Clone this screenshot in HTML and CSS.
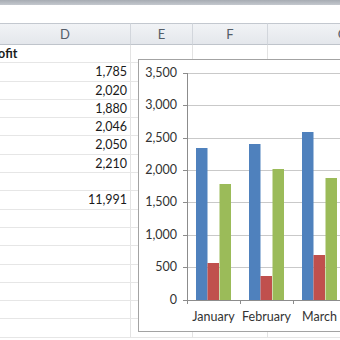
FILE: index.html
```html
<!DOCTYPE html>
<html>
<head>
<meta charset="utf-8">
<link rel="stylesheet" href="styles.css">
</head>
<body>
<div class="app">
  <div class="topbar"></div>
  <div class="strip"></div>
  <div class="sheet">
    <div class="hdr">D</div><div class="hdr">E</div><div class="hdr">F</div><div class="hdr">G</div>

    <div class="cell title"><span class="clip">Profit</span></div><div class="cell"></div><div class="cell"></div><div class="cell"></div>
    <div class="cell num">1,785</div><div class="cell"></div><div class="cell"></div><div class="cell"></div>
    <div class="cell num">2,020</div><div class="cell"></div><div class="cell"></div><div class="cell"></div>
    <div class="cell num">1,880</div><div class="cell"></div><div class="cell"></div><div class="cell"></div>
    <div class="cell num">2,046</div><div class="cell"></div><div class="cell"></div><div class="cell"></div>
    <div class="cell num">2,050</div><div class="cell"></div><div class="cell"></div><div class="cell"></div>
    <div class="cell num">2,210</div><div class="cell"></div><div class="cell"></div><div class="cell"></div>
    <div class="cell num"></div><div class="cell"></div><div class="cell"></div><div class="cell"></div>
    <div class="cell num">11,991</div><div class="cell"></div><div class="cell"></div><div class="cell"></div>
    <div class="cell"></div><div class="cell"></div><div class="cell"></div><div class="cell"></div>
    <div class="cell"></div><div class="cell"></div><div class="cell"></div><div class="cell"></div>
    <div class="cell"></div><div class="cell"></div><div class="cell"></div><div class="cell"></div>
    <div class="cell"></div><div class="cell"></div><div class="cell"></div><div class="cell"></div>
    <div class="cell"></div><div class="cell"></div><div class="cell"></div><div class="cell"></div>
    <div class="cell"></div><div class="cell"></div><div class="cell"></div><div class="cell"></div>
    <div class="cell"></div><div class="cell"></div><div class="cell"></div><div class="cell"></div>
  </div>

  <div class="chart">
    <svg class="plot" width="219" height="271" viewBox="139 60 219 271" xmlns="http://www.w3.org/2000/svg">
      <g class="grid" stroke="#c9c9c9" stroke-width="1">
        <line x1="187" y1="73.5" x2="360" y2="73.5"/>
        <line x1="187" y1="105.5" x2="360" y2="105.5"/>
        <line x1="187" y1="138.5" x2="360" y2="138.5"/>
        <line x1="187" y1="170.5" x2="360" y2="170.5"/>
        <line x1="187" y1="202.5" x2="360" y2="202.5"/>
        <line x1="187" y1="235.5" x2="360" y2="235.5"/>
        <line x1="187" y1="267.5" x2="360" y2="267.5"/>
      </g>
      <g fill="#4f81bd">
        <rect x="196" y="148" width="11.5" height="152"/>
        <rect x="249" y="144" width="11.5" height="156"/>
        <rect x="302" y="132" width="11.5" height="168"/>
      </g>
      <g fill="#c0504d">
        <rect x="207.5" y="263" width="11.5" height="37"/>
        <rect x="260.5" y="276" width="11.5" height="24"/>
        <rect x="313.5" y="255" width="11.5" height="45"/>
      </g>
      <g fill="#9bbb59">
        <rect x="219.5" y="184" width="11.5" height="116"/>
        <rect x="272.5" y="169" width="11.5" height="131"/>
        <rect x="325.5" y="178" width="11.5" height="122"/>
      </g>
      <g stroke="#8c8c8c" stroke-width="1">
        <line x1="187.5" y1="73" x2="187.5" y2="304"/>
        <line x1="183" y1="300.5" x2="360" y2="300.5"/>
        <line x1="183" y1="73.5" x2="187" y2="73.5"/>
        <line x1="183" y1="105.5" x2="187" y2="105.5"/>
        <line x1="183" y1="138.5" x2="187" y2="138.5"/>
        <line x1="183" y1="170.5" x2="187" y2="170.5"/>
        <line x1="183" y1="202.5" x2="187" y2="202.5"/>
        <line x1="183" y1="235.5" x2="187" y2="235.5"/>
        <line x1="183" y1="267.5" x2="187" y2="267.5"/>
        <line x1="240.5" y1="300" x2="240.5" y2="304"/>
        <line x1="293.5" y1="300" x2="293.5" y2="304"/>
      </g>
      <g class="ylab" text-anchor="end">
        <text x="177" y="77">3,500</text>
        <text x="177" y="109">3,000</text>
        <text x="177" y="142">2,500</text>
        <text x="177" y="174">2,000</text>
        <text x="177" y="206">1,500</text>
        <text x="177" y="239">1,000</text>
        <text x="177" y="271">500</text>
        <text x="177" y="304">0</text>
      </g>
      <g class="xlab" text-anchor="middle">
        <text x="213.5" y="321">January</text>
        <text x="266.5" y="321">February</text>
        <text x="319.5" y="321">March</text>
      </g>
    </svg>
  </div>
</div>
</body>
</html>
```
FILE: styles.css
```css
html, body {
  margin: 0;
  padding: 0;
  background: #ffffff;
  overflow: hidden;
}
.app {
  position: relative;
  width: 340px;
  height: 340px;
  overflow: hidden;
  font-family: Lato, "Open Sans", sans-serif;
  font-size: 12.5px;
  color: #1a1a1a;
}
.topbar {
  height: 5px;
  background: linear-gradient(#a7acb3, #c4c8ce);
}
.strip {
  height: 18px;
  background: #ffffff;
}
.sheet {
  display: grid;
  grid-template-columns: 131px 62px 75px 150px;
  grid-auto-rows: 18.3px;
  grid-template-rows: 22px;
}
.hdr {
  box-sizing: border-box;
  border-top: 1px solid #c3c8cf;
  border-bottom: 1px solid #bfc4cb;
  border-right: 1px solid #d2d6dc;
  background: linear-gradient(#f1f3f6, #e4e7ec);
  color: #545d68;
  text-align: center;
  line-height: 20px;
  font-size: 13px;
}
.cell {
  box-sizing: border-box;
  border-bottom: 1px solid #e6e6e6;
  border-right: 1px solid #e3e3e3;
  line-height: 17px;
  white-space: nowrap;
  overflow: hidden;
}
.num {
  text-align: right;
  padding-right: 3px;
}
.title {
  font-weight: bold;
}
.clip {
  display: inline-block;
  margin-left: -14px;
}
.chart {
  position: absolute;
  left: 138px;
  top: 59px;
  width: 220px;
  height: 273px;
  box-sizing: border-box;
  border: 1px solid #a3a3a3;
  background: #ffffff;
}
.plot {
  display: block;
}
.plot text {
  font-family: Lato, "Open Sans", sans-serif;
  font-size: 12.5px;
  fill: #333333;
}
```
